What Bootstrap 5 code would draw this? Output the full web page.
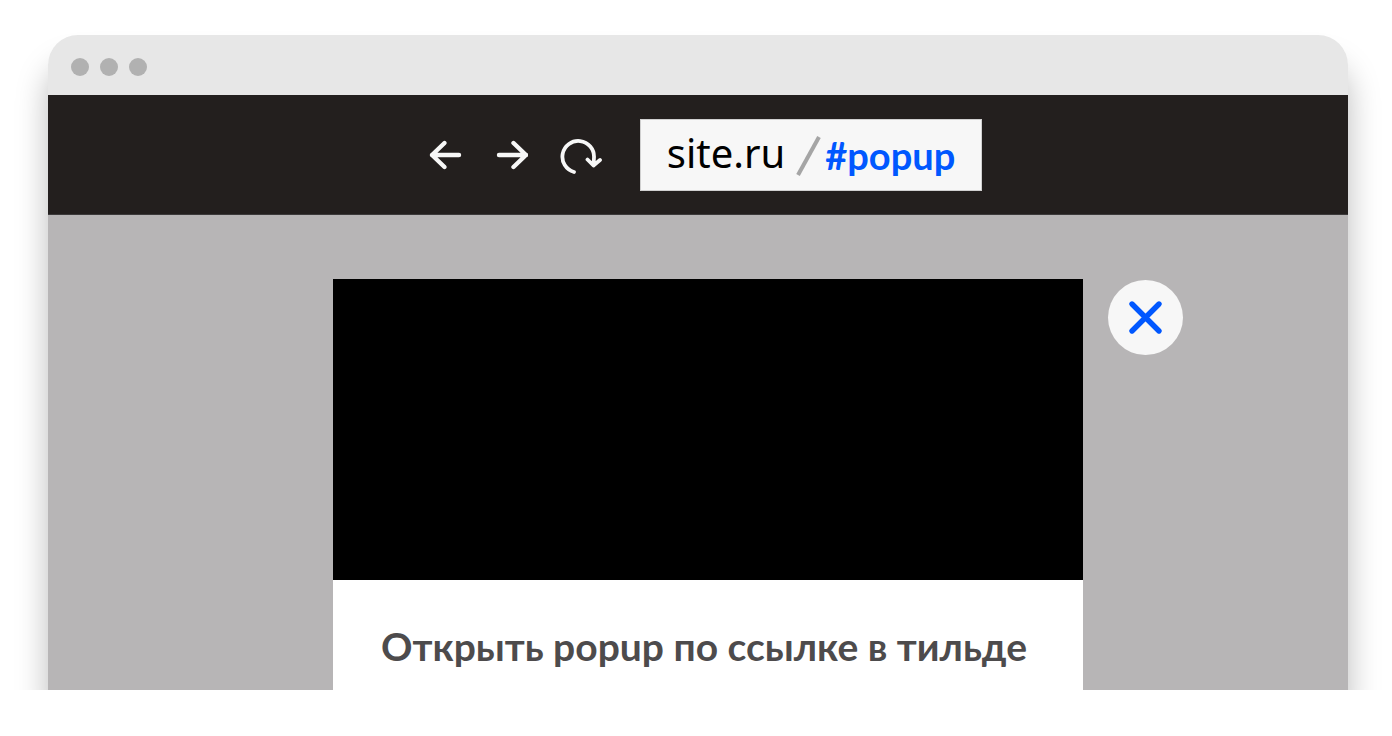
<!DOCTYPE html>
<html lang="ru">
<head>
<meta charset="utf-8">
<meta name="viewport" content="width=device-width, initial-scale=1">
<title>Открыть popup по ссылке в тильде</title>
<link rel="stylesheet" href="https://cdn.jsdelivr.net/npm/bootstrap@5.3.0/dist/css/bootstrap.min.css">
<script src="https://cdn.jsdelivr.net/npm/bootstrap@5.3.0/dist/js/bootstrap.bundle.min.js" defer></script>
<style>
  body { background: #fff; font-family: "Noto Sans", sans-serif; }
  .scene { padding: 35px 44px 0 48px; }
  .browser { border-radius: 30px 30px 0 0; box-shadow: 0 30px 32px rgba(0, 0, 0, .27); }
  .titlebar { background: #e7e7e7; height: 60px; padding: 4px 23px 0; gap: 11px; border-radius: 30px 30px 0 0; }
  .dot { width: 18px; height: 18px; background: #b1b1b1; }
  .toolbar { background: #231f1e; height: 120px; padding-left: 14px; border-bottom: 1px solid #3c3a3b; }
  .tool { line-height: 0; color: #f7f7f7; }
  .tools { gap: 32px; margin-right: 36px; }
  .address { background: #f7f7f7; height: 72px; padding: 0 26px; border: 1px solid #d0d0d0; }
  .host { font-size: 40px; line-height: 66px; padding-bottom: 4px; color: #000; }
  .anchor { font: 700 38px/70px Lato, sans-serif; color: #0057ff; }
  .stage { background: #b7b5b6; padding: 64px 0 0 120px; gap: 25px; }
  .popup { width: 750px; }
  .cover { background: #000; height: 301px; }
  .caption { height: 110px; padding: 38px 8px 0 0; }
  .caption h1 { font: 700 39px/56px Lato, sans-serif; color: #4d4b4c; }
  .close-btn { width: 75px; height: 75px; margin-top: 1px; background: #f7f7f7; color: #0057ff; line-height: 0; }
</style>
</head>
<body>
<div class="scene overflow-hidden">
  <main class="browser">
    <div class="titlebar d-flex align-items-center">
      <span class="dot rounded-circle"></span>
      <span class="dot rounded-circle"></span>
      <span class="dot rounded-circle"></span>
    </div>
    <nav class="toolbar d-flex align-items-center justify-content-center" aria-label="Навигация">
      <div class="tools d-flex align-items-center">
        <button type="button" class="tool border-0 bg-transparent p-0" aria-label="Назад">
          <svg width="34" height="44" viewBox="0 0 34 44" fill="none" stroke="currentColor" stroke-width="4.400" stroke-linecap="round" stroke-linejoin="round"><path d="M16.500 10 4 22l12.500 12M4 22h27"/></svg>
        </button>
        <button type="button" class="tool border-0 bg-transparent p-0" aria-label="Вперёд">
          <svg width="34" height="44" viewBox="0 0 34 44" fill="none" stroke="currentColor" stroke-width="4.400" stroke-linecap="round" stroke-linejoin="round"><path d="M19.500 10 32 22 19.500 34M32 22H5"/></svg>
        </button>
        <button type="button" class="tool border-0 bg-transparent p-0" aria-label="Обновить">
          <svg width="44" height="44" viewBox="0 0 44 44" fill="none" stroke="currentColor" stroke-width="3.800" stroke-linecap="round" stroke-linejoin="round"><path d="M14 39A15.800 15.800 0 1 1 34 24.500L33.500 32.500M27.500 26.500 33.500 32.500 40 27"/></svg>
        </button>
      </div>
      <div class="address d-flex align-items-center">
        <span class="host">site.ru</span>
        <svg class="ms-2" width="32" height="44" viewBox="0 0 32 44" fill="none" stroke="#a5a5a5" stroke-width="4" aria-hidden="true"><path d="M5 42 26 4"/></svg>
        <a class="anchor text-decoration-none" href="#popup">#popup</a>
      </div>
    </nav>
    <section class="stage d-flex justify-content-center align-items-start">
      <article class="popup bg-white" id="popup">
        <div class="cover"></div>
        <div class="caption text-center">
          <h1 class="m-0 text-nowrap">Открыть popup по ссылке в тильде</h1>
        </div>
      </article>
      <button type="button" class="close-btn border-0 rounded-circle p-0" aria-label="Закрыть">
        <svg width="36" height="36" viewBox="0 0 36 36" fill="none" stroke="currentColor" stroke-width="5.400" stroke-linecap="round"><path d="M4 4 31 31M31 4 4 31"/></svg>
      </button>
    </section>
  </main>
</div>
</body>
</html>
